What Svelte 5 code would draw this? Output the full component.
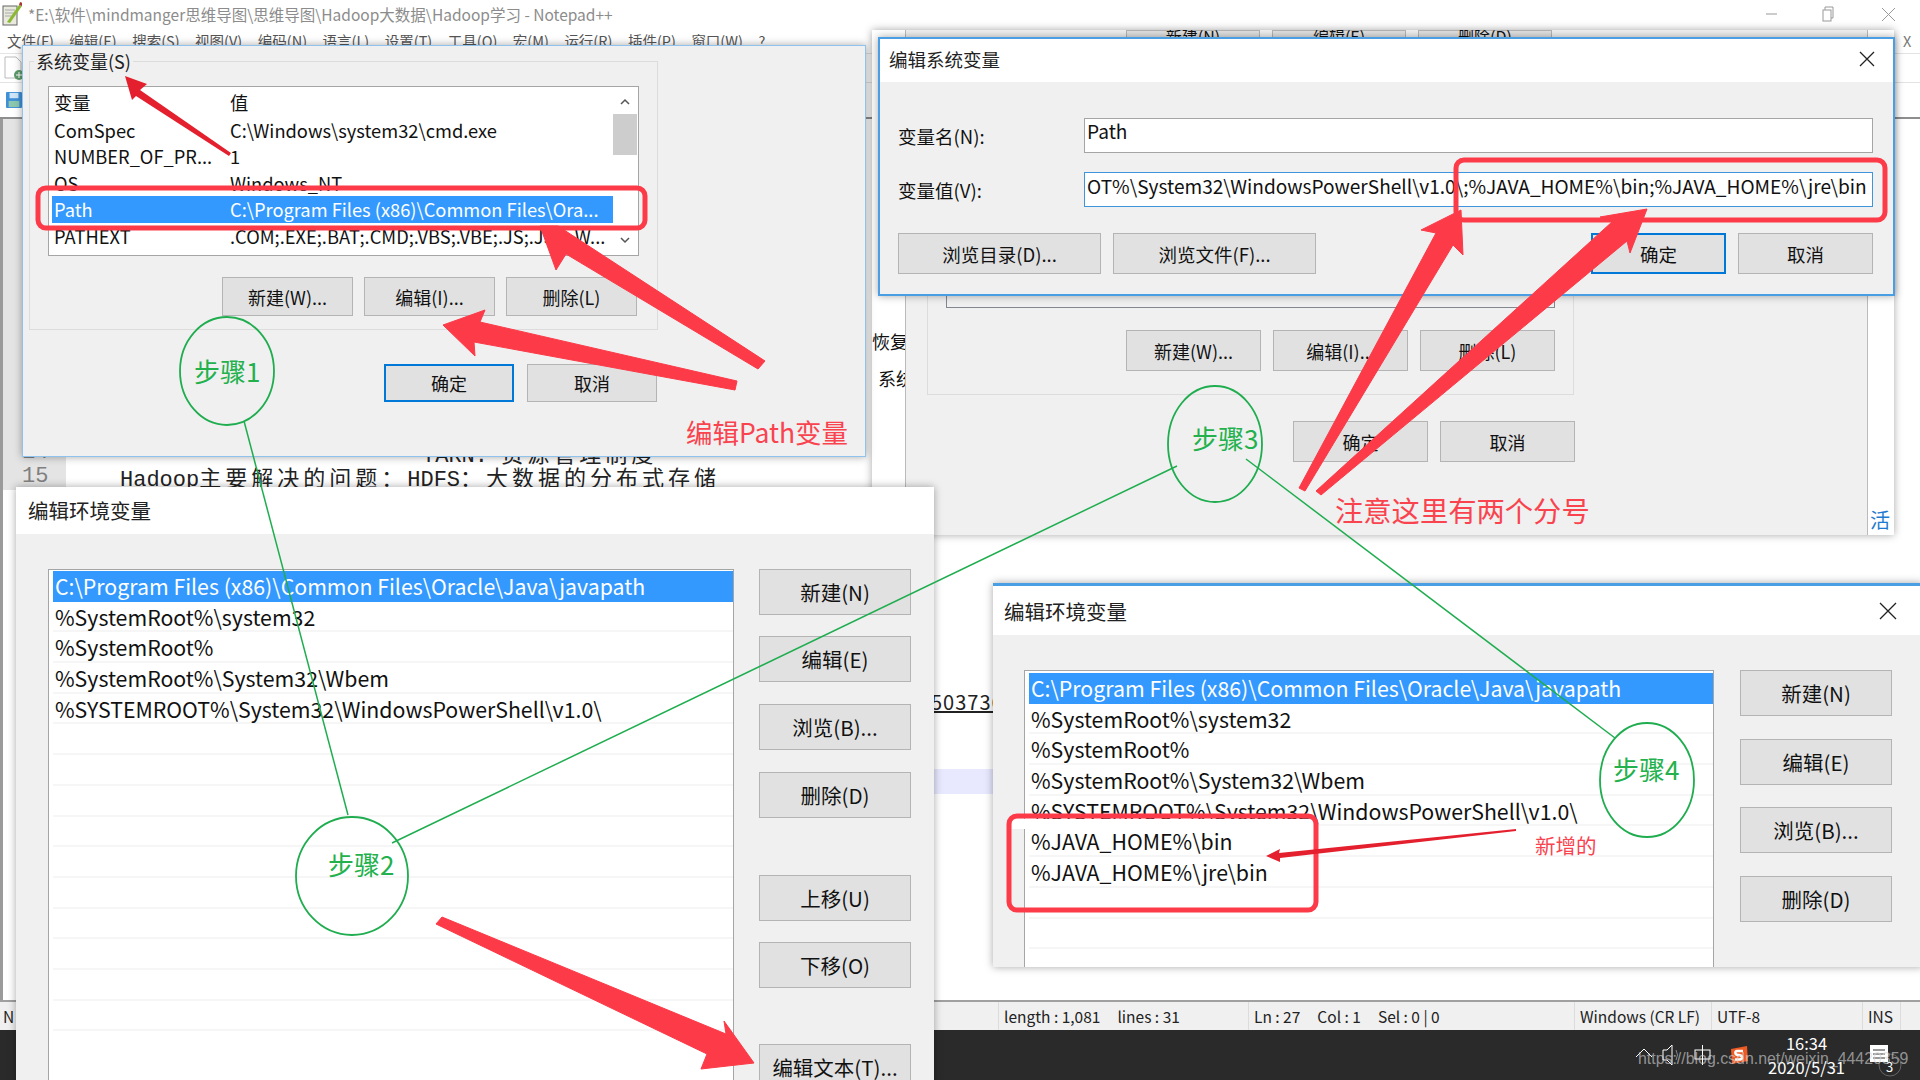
<script>
	const menus = ['文件(F)', '编辑(E)', '搜索(S)', '视图(V)', '编码(N)', '语言(L)', '设置(T)', '工具(O)', '宏(M)', '运行(R)', '插件(P)', '窗口(W)', '?'];

	const sysVars = [
		['ComSpec', 'C:\\Windows\\system32\\cmd.exe'],
		['NUMBER_OF_PR...', '1'],
		['OS', 'Windows_NT'],
		['Path', 'C:\\Program Files (x86)\\Common Files\\Ora...'],
		['PATHEXT', '.COM;.EXE;.BAT;.CMD;.VBS;.VBE;.JS;.JSE;.W...']
	];

	const basePaths = [
		'C:\\Program Files (x86)\\Common Files\\Oracle\\Java\\javapath',
		'%SystemRoot%\\system32',
		'%SystemRoot%',
		'%SystemRoot%\\System32\\Wbem',
		'%SYSTEMROOT%\\System32\\WindowsPowerShell\\v1.0\\'
	];
	const leftRows = [...basePaths, ...Array(10).fill('')];
	const rightRows = [...basePaths, '%JAVA_HOME%\\bin', '%JAVA_HOME%\\jre\\bin', '', '', ''];

	const leftButtons = [
		{ label: '新建(N)', top: 0 },
		{ label: '编辑(E)', top: 21 },
		{ label: '浏览(B)...', top: 22 },
		{ label: '删除(D)', top: 22 },
		{ label: '上移(U)', top: 57 },
		{ label: '下移(O)', top: 21 },
		{ label: '编辑文本(T)...', top: 56 }
	];
	const rightButtons = ['新建(N)', '编辑(E)', '浏览(B)...', '删除(D)'];

	// big hand drawn arrows, in page coordinates
	const arrows = [
		'540,226 556,270 566,254 758,369 765,361 558,226',
		'443,325 485,310 480,322 737,381 735,390 474,342 475,356',
		'1461,210 1421,230 1436,233 1299,488 1305,491 1453,245 1463,255',
		'1647,209 1600,217 1613,221 1316,491 1321,495 1627,241 1630,253',
		'754,1063 724,1021 726,1034 442,917 436,924 707,1054 701,1069'
	];
	const redBoxes = [
		{ x: 38, y: 188, w: 607, h: 40 },
		{ x: 1456, y: 160, w: 429, h: 60 },
		{ x: 1009, y: 816, w: 307, h: 94 }
	];
	const greenLines = [
		[244, 421, 348, 815],
		[392, 843, 1177, 466],
		[1246, 459, 1615, 738]
	];
	const steps = [
		{ cx: 227, cy: 371, rx: 47, ry: 54, label: '步骤1', tx: 194, ty: 354 },
		{ cx: 352, cy: 876, rx: 56, ry: 59, label: '步骤2', tx: 328, ty: 847 },
		{ cx: 1215, cy: 444, rx: 47, ry: 58, label: '步骤3', tx: 1192, ty: 421 },
		{ cx: 1647, cy: 780, rx: 47, ry: 57, label: '步骤4', tx: 1613, ty: 752 }
	];
</script>

<div class="desktop">
	<!-- notepad++ in the background -->
	<div class="npp">
		<header class="titlebar">
			<svg class="app-icon" width="20" height="24" viewBox="0 0 20 24">
				<rect x="1" y="4" width="14" height="19" fill="#e9e9dd" stroke="#666" />
				<path d="M3 8h10M3 11h10M3 14h8" stroke="#aaa" />
				<path d="M5 20 L17 3 L20 4 L8 21 Z" fill="#8ab832" />
				<path d="M17 3 L20 4 L21 1 L18 0 Z" fill="#a33" />
			</svg>
			<span class="title">*E:\软件\mindmanger思维导图\思维导图\Hadoop大数据\Hadoop学习 - Notepad++</span>
			<div class="win-buttons">
				<svg width="130" height="16" viewBox="0 0 130 16" fill="none" stroke="#999">
					<path d="M0 8h11" />
					<rect x="57" y="4" width="8" height="11" />
					<path d="M59 4V1h8v11h-2" />
					<path d="M116 2l13 13M129 2l-13 13" />
				</svg>
			</div>
		</header>
		<nav class="menubar">
			{#each menus as m}<span>{m}</span>{/each}
			<span class="menu-x">X</span>
		</nav>
		<div class="toolbar">
			<svg width="20" height="24" viewBox="0 0 20 24">
				<path d="M1 1h11l5 5v16H1z" fill="#fff" stroke="#bbb" />
				<circle cx="15" cy="19" r="5" fill="#5a9a6a" />
				<path d="M15 16v6M12 19h6" stroke="#fff" />
			</svg>
		</div>
		<div class="tabbar">
			<svg width="16" height="16" viewBox="0 0 18 18">
				<rect width="18" height="18" rx="1" fill="#3f8fd8" />
				<rect x="4" y="1" width="10" height="6" fill="#cfe6f8" />
				<rect x="3" y="10" width="12" height="7" fill="#8cc7b0" />
			</svg>
		</div>
		<main class="editor">
			<div class="line">
				<span class="num">14</span>
				<span class="code yarn">YARN: <span class="cn">资源管理制度</span></span>
			</div>
			<div class="line">
				<span class="num">15</span>
				<span class="code">Hadoop<span class="cn">主要解决的问题：</span>HDFS<span class="cn">：大数据的分布式存储</span></span>
			</div>
			<a class="link" href="#top">50373657</a>
			<div class="caret-line"></div>
		</main>
		<footer class="statusbar">
			<span class="st-n">N</span>
			<span class="st st-len">length : 1,081<i>lines : 31</i></span>
			<span class="st st-pos">Ln : 27<i>Col : 1</i><i>Sel : 0 | 0</i></span>
			<span class="st st-eol">Windows (CR LF)</span>
			<span class="st st-enc">UTF-8</span>
			<span class="st st-ins">INS</span>
		</footer>
		<div class="taskbar">
			<svg width="110" height="30" viewBox="0 0 110 30" fill="none" stroke="#fff">
				<path d="M1 17l8-8 8 8" />
				<path d="M28 10h4l5-5v20l-5-5h-4z" />
				<path d="M41 10q3 5 0 10" stroke="#888" />
				<rect x="60" y="10" width="15" height="9" />
				<path d="M67.500 5v20" />
			</svg>
			<svg class="sogou" width="20" height="20" viewBox="0 0 20 20">
				<path d="M2 4 L18 1 L19 16 L3 19 Z" fill="#ee5a24" />
				<path d="M14 6 H8 Q6 6 6.500 8.500 Q7 10 10 10 Q13.500 10.500 13 13 Q12.500 14.500 10 14.500 H6" fill="none" stroke="#fff" stroke-width="2.500" />
			</svg>
			<div class="clock">
				<span>16:34</span>
				<span>2020/5/31</span>
			</div>
			<svg class="notify" width="34" height="34" viewBox="0 0 34 34">
				<circle cx="20" cy="20" r="11" fill="none" stroke="#666" />
				<path d="M0 0h18v17H0z" fill="#fff" />
				<path d="M3 5h12M3 9h12M3 13h12" stroke="#333" />
			</svg>
			<span class="badge">3</span>
			<span class="watermark">https://blog.csdn.net/weixin_44420359</span>
		</div>
	</div>

	<!-- environment variables dialog behind the edit dialog -->
	<section class="win behind">
		<div class="behind-left">
			<span class="behind-a">恢复</span>
			<span class="behind-b">系统</span>
		</div>
		<div class="behind-main">
			<div class="behind-top">
				<span class="btn stub">新建(N)</span>
				<span class="btn stub">编辑(E)</span>
				<span class="btn stub">删除(D)</span>
			</div>
			<div class="behind-group">
				<div class="behind-list"></div>
				<div class="row-btns behind-btns">
					<button class="btn">新建(W)...</button>
					<button class="btn">编辑(I)...</button>
					<button class="btn">删除(L)</button>
				</div>
			</div>
			<div class="row-btns behind-ok">
				<button class="btn">确定</button>
				<button class="btn">取消</button>
			</div>
		</div>
		<div class="behind-right"><span>活</span></div>
	</section>

	<!-- system variables dialog -->
	<section class="win sys">
		<fieldset class="group">
			<legend>系统变量(S)</legend>
			<div class="sys-list">
				<div class="sys-rows">
					<div class="sys-row head"><span>变量</span><span>值</span></div>
					{#each sysVars as [k, v]}
						<div class="sys-row" class:sel={k === 'Path'}><span>{k}</span><span>{v}</span></div>
					{/each}
				</div>
				<div class="scroll">
					<svg width="12" height="8" viewBox="0 0 12 8" fill="none" stroke="#555" stroke-width="1.500"><path d="M2 6l4-4 4 4" /></svg>
					<div class="thumb"></div>
					<svg width="12" height="8" viewBox="0 0 12 8" fill="none" stroke="#555" stroke-width="1.500"><path d="M2 2l4 4 4-4" /></svg>
				</div>
			</div>
			<div class="row-btns sys-btns">
				<button class="btn">新建(W)...</button>
				<button class="btn">编辑(I)...</button>
				<button class="btn">删除(L)</button>
			</div>
		</fieldset>
		<div class="row-btns sys-ok">
			<button class="btn primary">确定</button>
			<button class="btn">取消</button>
		</div>
	</section>

	<!-- edit system variable dialog -->
	<section class="win edit">
		<div class="win-title edit-title">
			<span>编辑系统变量</span>
			<svg width="16" height="16" viewBox="0 0 16 16" stroke="#222" stroke-width="1.300"><path d="M1 1l14 14M15 1L1 15" /></svg>
		</div>
		<div class="edit-body">
			<div class="field">
				<span class="field-label">变量名(N):</span>
				<div class="input">Path</div>
			</div>
			<div class="field">
				<span class="field-label">变量值(V):</span>
				<div class="input active">OT%\System32\WindowsPowerShell\v1.0\;%JAVA_HOME%\bin;%JAVA_HOME%\jre\bin</div>
			</div>
			<div class="edit-btns">
				<button class="btn wide">浏览目录(D)...</button>
				<button class="btn wide">浏览文件(F)...</button>
				<span class="spacer"></span>
				<button class="btn primary">确定</button>
				<button class="btn">取消</button>
			</div>
		</div>
	</section>

	<!-- path editor, bottom left -->
	<section class="win path-left">
		<div class="win-title path-title"><span>编辑环境变量</span></div>
		<div class="path-body">
			<div class="path-list">
				{#each leftRows as row, i}
					<div class="path-row" class:sel={i === 0}>{row}</div>
				{/each}
			</div>
			<div class="path-btns">
				{#each leftButtons as b}
					<button class="btn" style="margin-top: {b.top}px">{b.label}</button>
				{/each}
			</div>
		</div>
	</section>

	<!-- path editor, bottom right -->
	<section class="win path-right">
		<div class="win-title path-title">
			<span>编辑环境变量</span>
			<svg width="18" height="18" viewBox="0 0 18 18" stroke="#222" stroke-width="1.300"><path d="M1 1l16 16M17 1L1 17" /></svg>
		</div>
		<div class="path-body">
			<div class="path-list">
				{#each rightRows as row, i}
					<div class="path-row" class:sel={i === 0}>{row}</div>
				{/each}
			</div>
			<div class="path-btns">
				{#each rightButtons as label}
					<button class="btn">{label}</button>
				{/each}
			</div>
		</div>
	</section>

	<!-- annotations drawn over the windows -->
	<svg class="marks" width="1920" height="1080" viewBox="0 0 1920 1080">
		<rect x="1012" y="819" width="301" height="10" fill="#fff" />
		{#each redBoxes as b}
			<rect x={b.x} y={b.y} width={b.w} height={b.h} rx="8" fill="none" stroke="#fc3a48" stroke-width="5" />
		{/each}
		{#each arrows as points}
			<polygon {points} fill="#fc3a48" stroke="#fc3a48" stroke-linejoin="round" />
		{/each}
		<polygon points="125,76 147,84 140,90 231,153 229,156 136,96 132,100" fill="#e5202e" />
		<polygon points="1266,856 1280,849 1279,853 1516,829 1516,831 1280,858 1280,862" fill="#e5202e" />
		{#each greenLines as [x1, y1, x2, y2]}
			<line {x1} {y1} {x2} {y2} stroke="#1fad4f" stroke-width="1.500" />
		{/each}
		{#each steps as s}
			<ellipse cx={s.cx} cy={s.cy} rx={s.rx} ry={s.ry} fill="none" stroke="#1fad4f" stroke-width="1.800" />
		{/each}
	</svg>

	{#each steps as s}
		<span class="step" style="left: {s.tx}px; top: {s.ty}px">{s.label}</span>
	{/each}
	<span class="note note-path">编辑Path变量</span>
	<span class="note note-semi">注意这里有两个分号</span>
	<span class="note note-new">新增的</span>
</div>

<style>
	:global(body) {
		margin: 0;
		background: #fff;
	}

	.desktop {
		position: relative;
		width: 1920px;
		height: 1080px;
		overflow: hidden;
		font-family: "Noto Sans CJK SC", "Noto Sans", sans-serif;
		color: #111;
	}

	/* notepad++ */
	.npp {
		display: flex;
		flex-direction: column;
		height: 100%;
		background: #fff;
	}

	.titlebar {
		display: flex;
		align-items: center;
		height: 28px;
		padding-left: 2px;
	}

	.title {
		margin-left: 6px;
		font-size: 15.500px;
		color: #8c8c8c;
		white-space: nowrap;
	}

	.win-buttons {
		margin-left: auto;
		padding-right: 24px;
		line-height: 0;
	}

	.menubar {
		display: flex;
		align-items: center;
		gap: 15.500px;
		height: 25px;
		padding-left: 7px;
		font-size: 14.500px;
		color: #555;
		border-bottom: 1px solid #e4e4e4;
	}

	.menu-x {
		position: absolute;
		left: 1903px;
		color: #777;
	}

	.toolbar {
		display: flex;
		align-items: center;
		height: 28px;
		padding-left: 4px;
		border-bottom: 1px solid #e4e4e4;
	}

	.tabbar {
		display: flex;
		align-items: center;
		height: 34px;
		padding-left: 6px;
		border-bottom: 2px solid #8e8e8e;
	}

	.editor {
		flex: 1;
		padding-top: 321px;
		border-left: 3px solid #9a9a9a;
		background: linear-gradient(to right, #e4e4e4 63px, #fff 63px) no-repeat 0 0 / 100% 371px;
	}

	.line {
		display: flex;
		height: 24px;
		align-items: center;
		white-space: nowrap;
	}

	.num {
		width: 34px;
		padding-left: 19px;
		font: 22px "Liberation Mono", monospace;
		color: #808080;
	}

	.code {
		margin-left: 64px;
		font: 22px "Liberation Mono", "Noto Sans CJK SC", monospace;
		color: #222;
	}

	.yarn {
		margin-left: 366px;
	}

	.cn {
		letter-spacing: 4px;
	}

	.link {
		display: block;
		margin: 200px 0 0 928px;
		width: 100px;
		font-size: 20px;
		line-height: 27px;
		letter-spacing: 1px;
		color: #222;
		text-decoration: underline;
	}

	.caret-line {
		height: 25px;
		margin: 54px 0 0 800px;
		background: #e8e8ff;
	}

	.statusbar {
		position: relative;
		height: 30px;
		background: #f0f0f0;
		border-top: 2px solid #a0a0a0;
		box-sizing: border-box;
		font-size: 15.500px;
		line-height: 28px;
		color: #222;
	}

	.st {
		position: absolute;
		top: 0;
		height: 28px;
		padding-left: 5px;
		border-left: 1px solid #dcdcdc;
		white-space: nowrap;
	}

	.st i {
		font-style: normal;
		margin-left: 17px;
	}

	.st-n {
		position: absolute;
		left: 3px;
	}

	.st-len {
		left: 998px;
	}

	.st-pos {
		left: 1248px;
	}

	.st-eol {
		left: 1574px;
	}

	.st-enc {
		left: 1711px;
	}

	.st-ins {
		left: 1862px;
		width: 32px;
		border-right: 1px solid #dcdcdc;
	}

	.taskbar {
		position: relative;
		display: flex;
		align-items: center;
		height: 50px;
		padding-left: 1635px;
		background: #2a2a2a;
		color: #fff;
	}

	.sogou {
		margin-left: -16px;
	}

	.clock {
		display: flex;
		flex-direction: column;
		align-items: center;
		width: 115px;
		font-size: 16.500px;
		line-height: 24px;
	}

	.notify {
		align-self: flex-start;
		margin: 15px 0 0 6px;
	}

	.badge {
		position: absolute;
		left: 1886px;
		top: 27px;
		font-size: 13px;
	}

	.watermark {
		position: absolute;
		left: 1638px;
		top: 20px;
		font: 15.900px "Liberation Sans", sans-serif;
		color: rgba(215, 215, 215, 0.62);
		white-space: nowrap;
	}

	/* shared window parts */
	.win {
		position: absolute;
		box-sizing: border-box;
		background: #f0f0f0;
		box-shadow: 0 0 8px rgba(0, 0, 0, 0.35);
	}

	.win-title {
		display: flex;
		align-items: center;
		justify-content: space-between;
		box-sizing: border-box;
		background: #fff;
		color: #222;
	}

	.btn {
		box-sizing: border-box;
		padding: 0;
		background: #e1e1e1;
		border: 1px solid #b4b4b4;
		font-family: inherit;
		color: #111;
		white-space: nowrap;
	}

	.btn.primary {
		border: 2px solid #0078d7;
	}

	.row-btns {
		display: flex;
	}

	/* window behind the edit dialog */
	.behind {
		left: 872px;
		top: 30px;
		width: 1022px;
		height: 505px;
		display: flex;
		background: #fff;
	}

	.behind-left {
		position: relative;
		width: 33px;
		font-size: 18px;
		border-right: 1px solid #bbb;
	}

	.behind-a,
	.behind-b {
		position: absolute;
		left: 0;
		white-space: nowrap;
		width: 33px;
		overflow: hidden;
	}

	.behind-a {
		top: 298px;
	}

	.behind-b {
		top: 335px;
		left: 6px;
		width: 27px;
	}

	.behind-main {
		width: 961px;
		background: #f0f0f0;
		padding-left: 21px;
		box-sizing: border-box;
	}

	.behind-top {
		display: flex;
		gap: 12px;
		height: 7px;
		overflow: hidden;
		padding-left: 199px;
		font-size: 16px;
	}

	.stub {
		width: 134px;
		height: 40px;
		display: block;
		text-align: center;
		line-height: 10px;
	}

	.behind-group {
		box-sizing: border-box;
		width: 647px;
		height: 358px;
		border: 1px solid #dcdcdc;
		border-top: 0;
		padding: 0 18px;
	}

	.behind-list {
		height: 270px;
		border: 1px solid #828790;
		border-top: 0;
	}

	.behind-btns {
		gap: 12px;
		margin: 22px 0 0 180px;
	}

	.behind-btns .btn,
	.behind-ok .btn {
		width: 135px;
		height: 41px;
		font-size: 18px;
	}

	.behind-ok {
		gap: 12px;
		margin: 26px 0 0 366px;
	}

	.behind-right {
		position: relative;
		flex: 1;
		border-left: 1px solid #bbb;
		color: #1e7ad0;
		font-size: 20px;
		overflow: hidden;
	}

	.behind-right span {
		position: absolute;
		left: 2px;
		bottom: 1px;
	}

	/* system variables dialog */
	.sys {
		left: 22px;
		top: 45px;
		width: 844px;
		height: 412px;
		border: 1px solid #8fc2ec;
	}

	.group {
		box-sizing: border-box;
		width: 629px;
		height: 280px;
		margin: 4px 0 0 6px;
		padding: 0 18px;
		border: 1px solid #dcdcdc;
		min-width: 0;
	}

	.group legend {
		padding: 0 2px;
		margin-left: -14px;
		font-size: 18px;
		line-height: 22px;
		color: #222;
	}

	.sys-list {
		display: flex;
		box-sizing: border-box;
		width: 591px;
		height: 170px;
		margin-top: 14px;
		background: #fff;
		border: 1px solid #a5a5a5;
		font-size: 18.300px;
	}

	.sys-rows {
		width: 564px;
		padding-left: 3px;
		padding-top: 2px;
		overflow: hidden;
		box-sizing: border-box;
	}

	.sys-row {
		display: flex;
		height: 26.400px;
		line-height: 26px;
		white-space: nowrap;
		padding-left: 2px;
	}

	.sys-row.head {
		height: 27px;
		margin-bottom: 1px;
	}

	.sys-row span:first-child {
		width: 176px;
		flex: none;
	}

	.sys-row span:last-child {
		overflow: hidden;
		width: 382px;
	}

	.sys-row.sel {
		background: #3399ff;
		color: #fff;
	}

	.scroll {
		display: flex;
		flex-direction: column;
		align-items: center;
		justify-content: space-between;
		width: 24px;
		padding: 11px 0;
		box-sizing: border-box;
	}

	.thumb {
		width: 24px;
		height: 41px;
		margin: 8px 0 auto;
		background: #cdcdcd;
	}

	.sys-btns {
		gap: 11px;
		margin: 21px 0 0 174px;
	}

	.sys-btns .btn {
		width: 131px;
		height: 39px;
		font-size: 18px;
	}

	.sys-ok {
		gap: 13px;
		margin: 34px 0 0 361px;
	}

	.sys-ok .btn {
		width: 130px;
		height: 38px;
		font-size: 18px;
	}

	/* edit system variable dialog */
	.edit {
		left: 878px;
		top: 37px;
		width: 1017px;
		height: 259px;
		border: 2px solid #4a9fe4;
	}

	.edit-title {
		height: 43px;
		padding: 0 18px 3px 9px;
		font-size: 18.500px;
	}

	.edit-body {
		padding: 36px 20px 0 18px;
	}

	.field {
		display: flex;
		align-items: center;
		margin-bottom: 19px;
	}

	.field-label {
		width: 186px;
		font-size: 18.500px;
	}

	.input {
		box-sizing: border-box;
		flex: 1;
		height: 35px;
		padding-left: 2px;
		background: #fff;
		border: 1px solid #a5a5a5;
		font-size: 19.100px;
		line-height: 24px;
		white-space: nowrap;
		overflow: hidden;
	}

	.input.active {
		border-color: #3f95dc;
		line-height: 27px;
	}

	.edit-btns {
		display: flex;
		gap: 12px;
		margin-top: 26px;
	}

	.edit-btns .btn {
		width: 135px;
		height: 41px;
		font-size: 18.500px;
	}

	.edit-btns .btn.wide {
		width: 203px;
	}

	.spacer {
		flex: 1;
	}

	/* path editors */
	.path-left {
		left: 16px;
		top: 487px;
		width: 918px;
		height: 600px;
	}

	.path-right {
		left: 993px;
		top: 583px;
		width: 930px;
		height: 384px;
		border-top: 3px solid #4a9fe4;
		overflow: hidden;
	}

	.path-title {
		height: 47px;
		padding: 0 22px 2px 12px;
		font-size: 20.500px;
	}

	.path-right .path-title {
		height: 49px;
		padding: 0 26px 0 11px;
	}

	.path-body {
		display: flex;
		padding: 35px 0 0 32px;
	}

	.path-right .path-body {
		padding-left: 31px;
	}

	.path-list {
		box-sizing: border-box;
		flex: none;
		width: 686px;
		height: 560px;
		padding: 1px 0 0 4px;
		background: #fff;
		border: 1px solid #a5a5a5;
		font-size: 21.300px;
		overflow: hidden;
	}

	.path-right .path-list {
		width: 690px;
		padding-top: 2px;
	}

	.path-row {
		box-sizing: border-box;
		height: 30.700px;
		line-height: 29px;
		padding-left: 2px;
		border-bottom: 2px solid #f6f6f6;
		white-space: nowrap;
	}

	.path-row.sel {
		background: #3399ff;
		color: #fff;
		border-bottom: 0;
	}

	.path-btns {
		display: flex;
		flex-direction: column;
		margin-left: 25px;
	}

	.path-right .path-btns {
		margin-left: 26px;
		gap: 22.500px;
	}

	.path-btns .btn {
		width: 152px;
		height: 46px;
		font-size: 20.500px;
	}

	/* annotations */
	.marks {
		position: absolute;
		left: 0;
		top: 0;
	}

	.step {
		position: absolute;
		font-size: 26px;
		line-height: 34px;
		color: #22b14c;
		white-space: nowrap;
	}

	.note {
		position: absolute;
		color: #f9434f;
		white-space: nowrap;
	}

	.note-path {
		left: 686px;
		top: 413px;
		font-size: 26.500px;
		line-height: 38px;
	}

	.note-semi {
		left: 1335px;
		top: 490px;
		font-size: 28.300px;
		line-height: 40px;
	}

	.note-new {
		left: 1535px;
		top: 830px;
		font-size: 20.500px;
		line-height: 30px;
	}
</style>
